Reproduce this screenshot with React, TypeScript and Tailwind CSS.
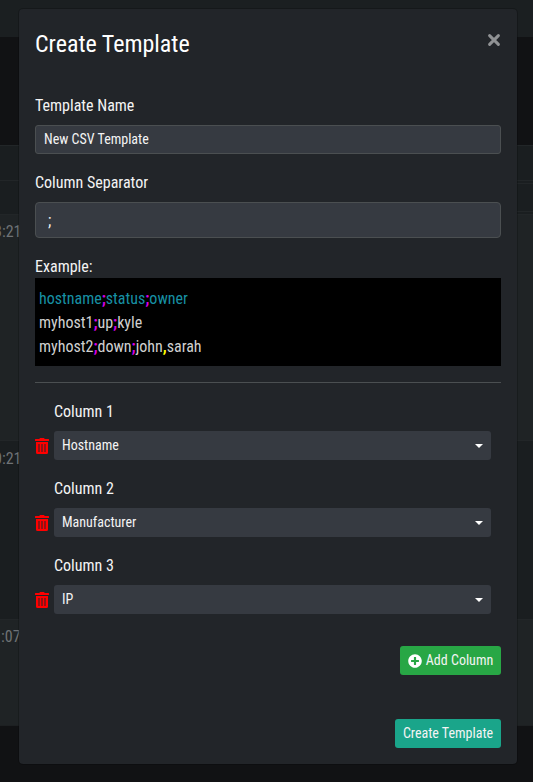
import type { ReactNode } from "react";
import { FaPlusCircle } from "react-icons/fa";

function Backdrop() {
  return (
    <div className="flex h-[782px] w-full flex-col overflow-hidden bg-[#111214] text-[#6f7376]">
      <div className="h-[37px] shrink-0 bg-[#1b1f21]" />
      <div className="h-[108px] shrink-0" />
      <div className="flex h-[69px] shrink-0 justify-between bg-[#1a1e20]">
        <div className="flex w-5 flex-col border-t border-[#222628]">
          <div className="h-[35px] border-b border-[#222628]" />
        </div>
        <div className="flex w-5 flex-col border-t border-[#222628]">
          <div className="h-[34px]" />
          <div className="h-1 shrink-0 border-y border-[#222628]" />
          <div className="h-[27px]" />
          <div className="h-px shrink-0 bg-[#222628]" />
        </div>
      </div>
      <Row className="h-[226px] bg-[#1f2325] pt-[5px]" time="3:21" shift="-ml-[6px]" />
      <Row className="h-[179px] bg-[#1a1e20] pt-[6px]" time="0:21" shift="-ml-[6px]" />
      <Row className="h-[106px] bg-[#1f2325] pt-[5px]" time=":07" shift="ml-[1px]" />
      <div className="h-px bg-[#1d2022]" />
    </div>
  );
}

function Row({ className, time, shift }: { className: string; time: string; shift: string }) {
  return (
    <div className={`shrink-0 border-t border-[#222628] leading-6 ${className}`}>
      <div className={shift}>{time}</div>
    </div>
  );
}

function Trash() {
  return (
    <svg width="14" height="16" viewBox="0 0 14 16" className="mb-[6px] shrink-0" aria-hidden="true">
      <path
        fill="#f00"
        d="M1 4h12v10.500a1.500 1.500 0 0 1-1.500 1.500h-9a1.500 1.500 0 0 1-1.500-1.500zM.5 1h3.750l.3-.6a.75.750 0 0 1 .67-.4h3.560a.75.750 0 0 1 .67.400l.3.600h3.750a.5.500 0 0 1 .5.500v1a.5.500 0 0 1-.5.500h-13a.5.500 0 0 1-.5-.5v-1a.5.500 0 0 1 .5-.5z"
      />
      <path fill="#901214" d="M3 6h2v8h-2zM6 6h2v8h-2zM9 6h2v8h-2z" />
    </svg>
  );
}

function ColumnField({ label, value }: { label: string; value: string }) {
  return (
    <div className="mb-4">
      <div className="mb-[7px] ml-[19px] pt-px">{label}</div>
      <div className="flex items-end gap-[5px] pr-[10px]">
        <Trash />
        <div className="flex h-[29px] grow items-center justify-between rounded-[3px] bg-[#363a41] px-2 text-[14px]">
          <span className="pb-[2px]">{value}</span>
          <span className="mt-[1px] border-x-4 border-t-4 border-x-transparent border-t-white" />
        </div>
      </div>
    </div>
  );
}

function Sep({ children }: { children: ReactNode }) {
  return <b className="font-bold text-[#d400e8]">{children}</b>;
}

export default function App() {
  return (
    <div className="relative h-[782px] w-[533px] overflow-hidden font-['Roboto_Condensed','Roboto',sans-serif] text-[16px] leading-6 [font-stretch:75%]">
      <Backdrop />
      <div className="absolute top-[8px] left-[18px] flex h-[757px] w-[500px] flex-col rounded-[5px] border border-black/20 bg-[#222529] bg-clip-padding px-4 pt-4 text-[#f4f4f4]">
        <div className="flex h-[52px] shrink-0 items-start justify-between">
          <h5 className="pt-px text-[24px] leading-9 text-white">Create Template</h5>
          <svg width="14" height="14" viewBox="0 0 14 14" className="mt-[8px]">
            <path d="M2.600 2.600l8.800 8.800M11.400 2.600l-8.800 8.800" stroke="#909294" strokeWidth="3" strokeLinecap="round" />
          </svg>
        </div>
        <div className="mt-4">
          <div className="mb-[7px] pt-px">Template Name</div>
          <div className="flex h-[29px] items-center rounded-[3px] border border-[#4b4f51] bg-[#363a41] px-2 pb-[2px] text-[14px]">
            New CSV Template
          </div>
        </div>
        <div className="mt-4">
          <div className="mb-[7px] pt-px">Column Separator</div>
          <div className="flex h-9 items-center rounded-[4px] border border-[#4b4f51] bg-[#363a41] px-3 pt-[2px]">;</div>
        </div>
        <div className="mt-[17px] -mb-px">Example:</div>
        <div className="bg-black px-1 pt-[9px] pb-[7px] text-[#d0d0d0]">
          <div className="text-[#1790a4]">
            hostname<Sep>;</Sep>status<Sep>;</Sep>owner
          </div>
          <div>
            myhost1<Sep>;</Sep>up<Sep>;</Sep>kyle
          </div>
          <div>
            myhost2<Sep>;</Sep>down<Sep>;</Sep>john<b className="text-[#ffff00]">,</b>sarah
          </div>
        </div>
        <div className="my-4 h-px shrink-0 bg-[#4b4f51]" />
        <ColumnField label="Column 1" value="Hostname" />
        <ColumnField label="Column 2" value="Manufacturer" />
        <ColumnField label="Column 3" value="IP" />
        <div className="mt-4 flex flex-col items-end gap-[44px] text-[14px]">
          <button className="flex h-[29px] w-[101px] items-center justify-center gap-1 rounded-[3px] bg-[#28a745]">
            <FaPlusCircle size={14} color="#fff" />
            <span className="pb-[2px]">Add Column</span>
          </button>
          <button className="h-[29px] w-[106px] rounded-[3px] bg-[#1aa58a] pb-[2px]">Create Template</button>
        </div>
      </div>
    </div>
  );
}
